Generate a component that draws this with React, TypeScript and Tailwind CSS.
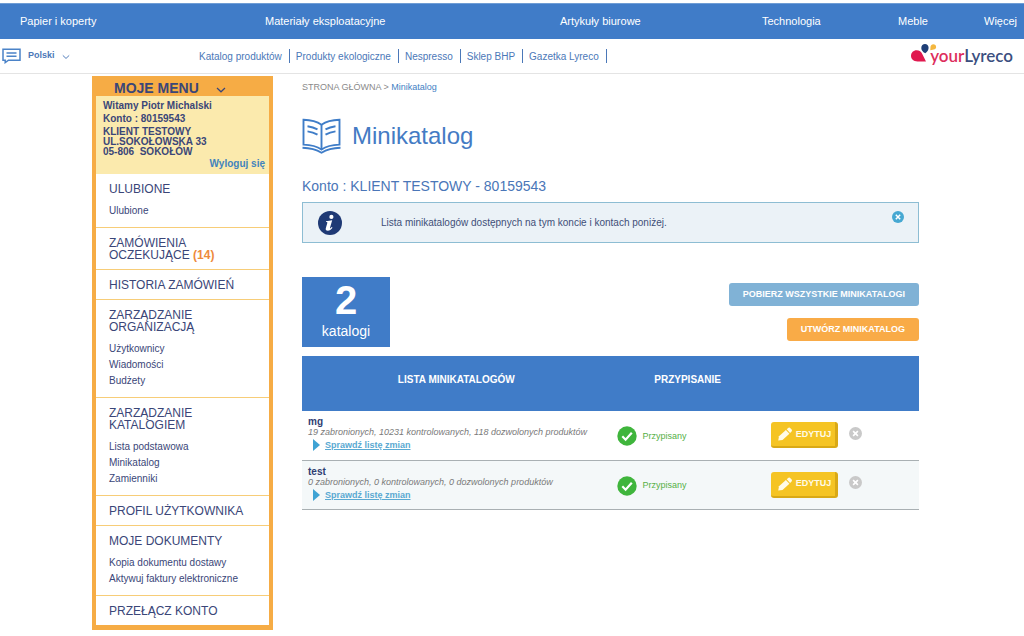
import React from "react";

const categories = ["Papier i koperty", "Materiały eksploatacyjne", "Artykuły biurowe", "Technologia", "Meble", "Więcej"];

const shortcuts = ["Katalog produktów", "Produkty ekologiczne", "Nespresso", "Sklep BHP", "Gazetka Lyreco"];

type Section = { title: string; count?: number; links?: string[] };

const sections: Section[] = [
  { title: "ULUBIONE", links: ["Ulubione"] },
  { title: "ZAMÓWIENIA OCZEKUJĄCE", count: 14 },
  { title: "HISTORIA ZAMÓWIEŃ" },
  { title: "ZARZĄDZANIE ORGANIZACJĄ", links: ["Użytkownicy", "Wiadomości", "Budżety"] },
  { title: "ZARZĄDZANIE KATALOGIEM", links: ["Lista podstawowa", "Minikatalog", "Zamienniki"] },
  { title: "PROFIL UŻYTKOWNIKA" },
  { title: "MOJE DOKUMENTY", links: ["Kopia dokumentu dostawy", "Aktywuj faktury elektroniczne"] },
  { title: "PRZEŁĄCZ KONTO" },
];

const catalogs = [
  { name: "mg", summary: "19 zabronionych, 10231 kontrolowanych, 118 dozwolonych produktów" },
  { name: "test", summary: "0 zabronionych, 0 kontrolowanych, 0 dozwolonych produktów" },
];

function Chevron({ className }: { className: string }) {
  return (
    <svg viewBox="0 0 10 6" className={className} fill="none" stroke="currentColor" strokeWidth="1.2" aria-hidden="true">
      <path d="M1 1l4 3.8L9 1" />
    </svg>
  );
}

function SpeechIcon() {
  return (
    <svg viewBox="0 0 19 16" className="h-4 w-[19px]" fill="none" stroke="#4b83c8" strokeWidth="1.5" aria-hidden="true">
      <path d="M1 1.2h17v11H6.5L3.2 14.6v-2.4H1z" />
      <path d="M4.5 5h10M4.5 8.3h10" />
    </svg>
  );
}

function BookIcon() {
  return (
    <svg viewBox="0 0 39 36" className="h-9 w-[39px]" fill="none" stroke="#3f7dc8" strokeWidth="1.9" aria-hidden="true">
      <path d="M19.500 6.800C15 3.600 8.500 2 1.500 1.800v24.800c7 .2 13.500 1.800 18 5 4.500-3.200 11-4.800 18-5V1.800c-7 .2-13.500 1.800-18 5z" />
      <path d="M19.500 6.800v24.500" />
      <path d="M5.500 8.200c3.800.5 7 1.500 10 3.200M5.500 13.400c3.800.5 7 1.500 10 3.200M33.500 8.200c-3.800.5-7 1.500-10 3.200M33.500 13.400c-3.800.5-7 1.500-10 3.200" />
      <path d="M.5 29.700c8 .2 14 1.900 19 5 5-3.100 11-4.800 19-5" />
    </svg>
  );
}

function InfoIcon() {
  return (
    <svg viewBox="0 0 24 24" className="size-6" aria-hidden="true">
      <circle cx="12" cy="12" r="12" fill="#1f3a75" />
      <circle cx="13.400" cy="5.900" r="2.100" fill="#fff" />
      <path d="M8 10.200c2-.2 4.200-.6 6.200-1l-2.200 7.600c-.2.900.3.900 1.800-.7l.7.600c-1.500 2-3 3-4.700 3-1.800 0-2.400-1-2-2.500l1.500-5.300c.2-.7 0-.9-1.300-.9z" fill="#fff" />
    </svg>
  );
}

function CrossIcon({ className }: { className: string }) {
  return (
    <svg viewBox="0 0 12 12" className={className} aria-hidden="true">
      <circle cx="6" cy="6" r="6" fill="currentColor" />
      <path d="M3.800 3.800l4.400 4.400M8.200 3.800L3.800 8.200" stroke="#fff" strokeWidth="1.500" />
    </svg>
  );
}

function CheckIcon() {
  return (
    <svg viewBox="0 0 20 20" className="size-5 shrink-0" aria-hidden="true">
      <circle cx="10" cy="10" r="9.700" fill="#3fb53c" />
      <path d="M5.300 10.300l3.300 3.400 6.200-7" fill="none" stroke="#fff" strokeWidth="2.200" />
    </svg>
  );
}

function PencilIcon() {
  return (
    <svg viewBox="0 0 14 14" className="size-[14px] shrink-0" aria-hidden="true">
      <path d="M.2 13.500l.8-4.300L7.900 3l3.500 3.700L4.500 12.900z" fill="#fffbe8" />
      <path d="M8.700 2.300l1.200-1.100c.9-.8 1.700-.8 2.500 0l1 1.100c.8.900.7 1.700-.1 2.500L12.100 6z" fill="#fffbe8" />
    </svg>
  );
}

function Logo() {
  return (
    <a href="#" aria-label="yourLyreco" className="-mt-[3px] flex items-start">
      <svg viewBox="0 0 28 20" className="h-5 w-7" aria-hidden="true">
        <path d="M16 18.500H7.500C3.500 18.500 1 16 1 12.800 1 9.500 3.500 7.200 6.600 7.200c2.700 0 4.800 1.500 5.800 4z" fill="#e0194f" />
        <path d="M15.300 10.300c-2.800-1.500-4-3.200-4-5.300C11.300 2.600 13 1 15 1s3.600 1.500 3.600 3.700c0 2-1.100 3.900-3.300 5.600z" fill="#1f3f77" />
        <path d="M20.300 7.200l.2-3.500c.2-1.600 1.300-2.500 2.800-2.500 1.700 0 2.800 1.100 2.800 2.700 0 1.400-.9 2.400-2.400 2.700z" fill="#f4b73f" />
      </svg>
      <span className="-ml-2 pt-[3px] font-['Lato',sans-serif] text-[17px] leading-5 font-semibold text-[#3b4f80]">
        <span className="text-[#dd2d5c]">your</span>Lyreco
      </span>
    </a>
  );
}

function Sidebar() {
  return (
    <aside className="w-[181px] shrink-0 border-4 border-t-0 border-b-[5px] border-[#f6ac45] text-[#3a4678]">
      <button className="flex h-5 w-full items-center bg-[#f6ac45] pt-1 pl-[18px] text-[14px] leading-4 font-bold">
        MOJE MENU
        <Chevron className="mt-1 ml-[17px] h-[6px] w-[10px]" />
      </button>
      <div className="bg-[#fbeaad] px-[7px] pt-[3px] pb-[3px] text-[10px] font-bold">
        <p className="leading-[13px]">Witamy Piotr Michalski</p>
        <p className="leading-[13px]">Konto : 80159543</p>
        <address className="pt-[2px] leading-[10px] whitespace-pre not-italic">{"KLIENT TESTOWY\nUL.SOKOŁOWSKA 33\n05-806  SOKOŁÓW"}</address>
        <p className="-mr-[3px] text-right leading-[14px]">
          <a href="#" className="text-[#4283bd]">Wyloguj się</a>
        </p>
      </div>
      <nav>
        {sections.map((s) => (
          <section key={s.title} className="border-b border-b-[#f7cd78] px-[13px] pt-[9px] pb-2 last:border-b-0">
            <h2 className="w-[140px] text-[12px] leading-3">
              <a href="#">
                {s.title}
                {s.count !== undefined && <b className="text-[#ee8a3c]"> ({s.count})</b>}
              </a>
            </h2>
            {s.links && (
              <ul className="pt-2 text-[10px] leading-4">
                {s.links.map((l) => (
                  <li key={l}><a href="#">{l}</a></li>
                ))}
              </ul>
            )}
          </section>
        ))}
      </nav>
    </aside>
  );
}

export default function App() {
  return (
    <div className="min-h-screen bg-white font-['Liberation_Sans',Arial,sans-serif]">
      <header className="pt-[3px]">
        <nav className="grid h-9 grid-cols-[245fr_295fr_202fr_136fr_86fr_40fr] items-center border-t border-[#6f9dd5] bg-[#407cc8] pl-5 text-[11px] whitespace-nowrap text-white">
          {categories.map((c) => (
            <a key={c} href="#">{c}</a>
          ))}
        </nav>
        <div className="flex h-[35px] items-center border-b border-[#e4e4e4] pr-[11px] pl-[2px] text-[#4b78b8]">
          <button className="flex w-[191px] items-center text-[9px] font-bold">
            <SpeechIcon />
            <span className="ml-[7px]">Polski</span>
            <Chevron className="mt-[2px] ml-[7px] h-[6px] w-2" />
          </button>
          <ul className="flex flex-1 items-center text-[10px] leading-3">
            {shortcuts.map((s) => (
              <li key={s} className="border-r border-[#4b78b8] pt-[2px] pr-[7px] pl-[6px] whitespace-nowrap">
                <a href="#">{s}</a>
              </li>
            ))}
          </ul>
          <Logo />
        </div>
      </header>

      <div className="flex items-start gap-[29px] pt-[2px] pr-[105px] pl-[92px]">
        <Sidebar />
        <main className="min-w-0 flex-1">
          <p className="pt-1 text-[9px] leading-[14px] text-[#8a8a8a]">
            <a href="#">STRONA GŁÓWNA</a> &gt; <span className="text-[#447fc4]">Minikatalog</span>
          </p>
          <h1 className="mt-6 flex items-center gap-[11px] text-[24px] leading-9 text-[#447bc4]">
            <BookIcon />
            Minikatalog
          </h1>
          <p className="mt-6 text-[14px] leading-4 text-[#4a76b8]">Konto : KLIENT TESTOWY - 80159543</p>

          <div className="mt-2 flex h-[41px] items-center border border-[#8dbdd3] bg-[#ebf2f7] pr-[14px] pl-[15px] text-[10px] text-[#414f78]">
            <InfoIcon />
            <p className="ml-[39px] flex-1">Lista minikatalogów dostępnych na tym koncie i kontach poniżej.</p>
            <button aria-label="Zamknij" className="mb-3">
              <CrossIcon className="size-3 text-[#46a8d2]" />
            </button>
          </div>

          <div className="mt-[34px] flex justify-between">
            <div className="h-[70px] w-[88px] bg-[#407cc8] pt-px text-center text-white">
              <p className="text-[40px] leading-[45px] font-bold">2</p>
              <p className="text-[14px] leading-4">katalogi</p>
            </div>
            <div className="flex flex-col items-end gap-3 pt-[6px] text-[9px] font-bold text-white">
              <button className="h-[23px] rounded-[3px] bg-[#80b2d6] px-[14px]">POBIERZ WSZYSTKIE MINIKATALOGI</button>
              <button className="h-[23px] rounded-[3px] bg-[#f9ab47] px-[14px]">UTWÓRZ MINIKATALOG</button>
            </div>
          </div>

          <table className="mt-[9px] w-full table-fixed border-collapse text-left">
            <colgroup>
              <col className="w-1/2" />
              <col className="w-1/4" />
              <col className="w-1/4" />
            </colgroup>
            <thead>
              <tr className="h-[55px] bg-[#407cc8] text-center text-[10px] text-white">
                <th className="pb-2">LISTA MINIKATALOGÓW</th>
                <th className="pb-2">PRZYPISANIE</th>
                <th aria-label="Akcje" />
              </tr>
            </thead>
            <tbody>
              {catalogs.map((c) => (
                <tr key={c.name} className="h-[49px] border-b border-[#a9b0b3] even:bg-[#f4f8f9]">
                  <td className="pl-[6px] align-top whitespace-nowrap">
                    <p className="pt-[6px] text-[10px] leading-[10px] font-bold text-[#2f3d72]">{c.name}</p>
                    <p className="text-[9px] leading-[10px] text-[#7a7a7a] italic">{c.summary}</p>
                    <a href="#" className="mt-[2px] flex items-center gap-[5px] pl-[5px] text-[9px] leading-3 font-bold text-[#5aa9d2] underline">
                      <svg viewBox="0 0 7 12" className="h-3 w-[7px]" aria-hidden="true">
                        <path d="M0 0l7 6-7 6z" fill="#3fa3d4" />
                      </svg>
                      Sprawdź listę zmian
                    </a>
                  </td>
                  <td className="pl-[6px]">
                    <span className="flex items-center gap-[6px] pt-[2px] text-[9px] text-[#56b047]">
                      <CheckIcon />
                      Przypisany
                    </span>
                  </td>
                  <td className="pl-[6px]">
                    <span className="flex items-center gap-[11px]">
                      <button className="flex h-[26px] w-[67px] items-center gap-1 rounded-[3px] border-r-[3px] border-b-2 border-[#d9a916] bg-[#f5c424] pl-[7px] text-[9px] font-bold text-[#fffbe8]">
                        <PencilIcon />
                        EDYTUJ
                      </button>
                      <button aria-label="Usuń" className="mb-1">
                        <CrossIcon className="size-[13px] text-[#c9c9c9]" />
                      </button>
                    </span>
                  </td>
                </tr>
              ))}
            </tbody>
          </table>
        </main>
      </div>
    </div>
  );
}
